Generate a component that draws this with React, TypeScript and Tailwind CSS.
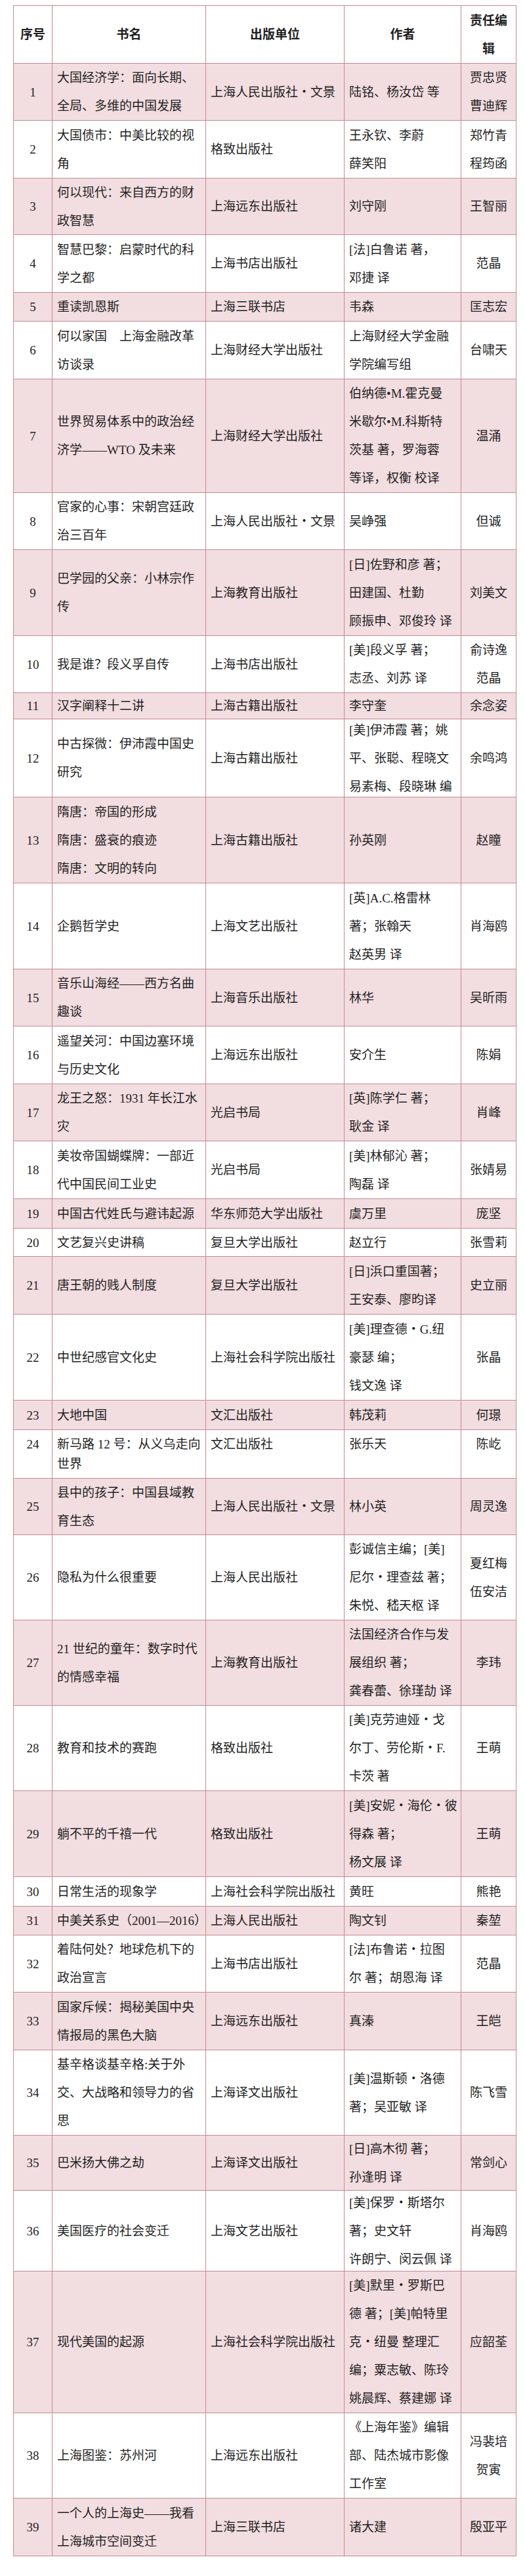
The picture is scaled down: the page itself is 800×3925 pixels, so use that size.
type Row = {
  n: string;
  title: string[];
  pub: string[];
  author: string[];
  editor: string[];
  h: string;
  top?: boolean;
};

const rows: Row[] = [
  { n: '1', title: ['大国经济学：面向长期、', '全局、多维的中国发展'], pub: ['上海人民出版社・文景'], author: ['陆铭、杨汝岱 等'], editor: ['贾忠贤', '曹迪辉'], h: 'h-[87px]' },
  { n: '2', title: ['大国债市：中美比较的视', '角'], pub: ['格致出版社'], author: ['王永钦、李蔚', '薛笑阳'], editor: ['郑竹青', '程筠函'], h: 'h-[88px]' },
  { n: '3', title: ['何以现代：来自西方的财', '政智慧'], pub: ['上海远东出版社'], author: ['刘守刚'], editor: ['王智丽'], h: 'h-[86px]' },
  { n: '4', title: ['智慧巴黎：启蒙时代的科', '学之都'], pub: ['上海书店出版社'], author: ['[法]白鲁诺 著，', '邓捷 译'], editor: ['范晶'], h: 'h-[88px]' },
  { n: '5', title: ['重读凯恩斯'], pub: ['上海三联书店'], author: ['韦森'], editor: ['匡志宏'], h: 'h-[44px]' },
  { n: '6', title: ['何以家国　上海金融改革', '访谈录'], pub: ['上海财经大学出版社'], author: ['上海财经大学金融', '学院编写组'], editor: ['台啸天'], h: 'h-[88px]' },
  { n: '7', title: ['世界贸易体系中的政治经', '济学——WTO 及未来'], pub: ['上海财经大学出版社'], author: ['伯纳德•M.霍克曼', '米歇尔•M.科斯特', '茨基 著，罗海蓉', '等译，权衡 校译'], editor: ['温涌'], h: 'h-[173px]' },
  { n: '8', title: ['官家的心事：宋朝宫廷政', '治三百年'], pub: ['上海人民出版社・文景'], author: ['吴峥强'], editor: ['但诚'], h: 'h-[87px]' },
  { n: '9', title: ['巴学园的父亲：小林宗作', '传'], pub: ['上海教育出版社'], author: ['[日]佐野和彦 著；', '田建国、杜勤', '顾振申、邓俊玲 译'], editor: ['刘美文'], h: 'h-[131px]' },
  { n: '10', title: ['我是谁？段义孚自传'], pub: ['上海书店出版社'], author: ['[美]段义孚 著；', '志丞、刘苏 译'], editor: ['俞诗逸', '范晶'], h: 'h-[87px]' },
  { n: '11', title: ['汉字阐释十二讲'], pub: ['上海古籍出版社'], author: ['李守奎'], editor: ['余念姿'], h: 'h-[40px]' },
  { n: '12', title: ['中古探微：伊沛霞中国史', '研究'], pub: ['上海古籍出版社'], author: ['[美]伊沛霞 著；姚', '平、张聪、程晓文', '易素梅、段晓琳 编'], editor: ['余鸣鸿'], h: 'h-[119px]' },
  { n: '13', title: ['隋唐：帝国的形成', '隋唐：盛衰的痕迹', '隋唐：文明的转向'], pub: ['上海古籍出版社'], author: ['孙英刚'], editor: ['赵瞳'], h: 'h-[131px]' },
  { n: '14', title: ['企鹅哲学史'], pub: ['上海文艺出版社'], author: ['[英]A.C.格雷林', '著；张翰天', '赵英男 译'], editor: ['肖海鸥'], h: 'h-[131px]' },
  { n: '15', title: ['音乐山海经——西方名曲', '趣谈'], pub: ['上海音乐出版社'], author: ['林华'], editor: ['吴昕雨'], h: 'h-[87px]' },
  { n: '16', title: ['遥望关河：中国边塞环境', '与历史文化'], pub: ['上海远东出版社'], author: ['安介生'], editor: ['陈娟'], h: 'h-[88px]' },
  { n: '17', title: ['龙王之怒：1931 年长江水', '灾'], pub: ['光启书局'], author: ['[英]陈学仁 著；', '耿金 译'], editor: ['肖峰'], h: 'h-[87px]' },
  { n: '18', title: ['美妆帝国蝴蝶牌：一部近', '代中国民间工业史'], pub: ['光启书局'], author: ['[美]林郁沁 著；', '陶磊 译'], editor: ['张婧易'], h: 'h-[88px]' },
  { n: '19', title: ['中国古代姓氏与避讳起源'], pub: ['华东师范大学出版社'], author: ['虞万里'], editor: ['庞坚'], h: 'h-[45px]' },
  { n: '20', title: ['文艺复兴史讲稿'], pub: ['复旦大学出版社'], author: ['赵立行'], editor: ['张雪莉'], h: 'h-[43px]' },
  { n: '21', title: ['唐王朝的贱人制度'], pub: ['复旦大学出版社'], author: ['[日]浜口重国著；', '王安泰、廖昀译'], editor: ['史立丽'], h: 'h-[88px]' },
  { n: '22', title: ['中世纪感官文化史'], pub: ['上海社会科学院出版社'], author: ['[美]理查德・G.纽', '豪瑟 编；', '钱文逸 译'], editor: ['张晶'], h: 'h-[131px]' },
  { n: '23', title: ['大地中国'], pub: ['文汇出版社'], author: ['韩茂莉'], editor: ['何璟'], h: 'h-[45px]' },
  { n: '24', title: ['新马路 12 号：从义乌走向', '世界'], pub: ['文汇出版社'], author: ['张乐天'], editor: ['陈屹'], h: 'h-[74px]', top: true },
  { n: '25', title: ['县中的孩子：中国县域教', '育生态'], pub: ['上海人民出版社・文景'], author: ['林小英'], editor: ['周灵逸'], h: 'h-[86px]' },
  { n: '26', title: ['隐私为什么很重要'], pub: ['上海人民出版社'], author: ['彭诚信主编；[美]', '尼尔・理查兹 著；', '朱悦、嵇天枢 译'], editor: ['夏红梅', '伍安洁'], h: 'h-[130px]' },
  { n: '27', title: ['21 世纪的童年：数字时代', '的情感幸福'], pub: ['上海教育出版社'], author: ['法国经济合作与发', '展组织 著；', '龚春蕾、徐瑾劼 译'], editor: ['李玮'], h: 'h-[130px]' },
  { n: '28', title: ['教育和技术的赛跑'], pub: ['格致出版社'], author: ['[美]克劳迪娅・戈', '尔丁、劳伦斯・F.', '卡茨 著'], editor: ['王萌'], h: 'h-[130px]' },
  { n: '29', title: ['躺不平的千禧一代'], pub: ['格致出版社'], author: ['[美]安妮・海伦・彼', '得森 著；', '杨文展 译'], editor: ['王萌'], h: 'h-[131px]' },
  { n: '30', title: ['日常生活的现象学'], pub: ['上海社会科学院出版社'], author: ['黄旺'], editor: ['熊艳'], h: 'h-[45px]' },
  { n: '31', title: ['中美关系史（2001—2016）'], pub: ['上海人民出版社'], author: ['陶文钊'], editor: ['秦堃'], h: 'h-[44px]' },
  { n: '32', title: ['着陆何处？地球危机下的', '政治宣言'], pub: ['上海书店出版社'], author: ['[法]布鲁诺・拉图', '尔 著；胡恩海 译'], editor: ['范晶'], h: 'h-[87px]' },
  { n: '33', title: ['国家斥候：揭秘美国中央', '情报局的黑色大脑'], pub: ['上海远东出版社'], author: ['真溱'], editor: ['王皑'], h: 'h-[88px]' },
  { n: '34', title: ['基辛格谈基辛格:关于外', '交、大战略和领导力的省', '思'], pub: ['上海译文出版社'], author: ['[美]温斯顿・洛德', '著；吴亚敏 译'], editor: ['陈飞雪'], h: 'h-[130px]' },
  { n: '35', title: ['巴米扬大佛之劫'], pub: ['上海译文出版社'], author: ['[日]高木彻 著；', '孙逢明 译'], editor: ['常剑心'], h: 'h-[84px]' },
  { n: '36', title: ['美国医疗的社会变迁'], pub: ['上海文艺出版社'], author: ['[美]保罗・斯塔尔', '著；史文轩', '许朗宁、闵云佩 译'], editor: ['肖海鸥'], h: 'h-[123px]' },
  { n: '37', title: ['现代美国的起源'], pub: ['上海社会科学院出版社'], author: ['[美]默里・罗斯巴', '德 著；[美]帕特里', '克・纽曼 整理汇', '编；粟志敏、陈玲', '姚晨辉、蔡建娜 译'], editor: ['应韶荃'], h: 'h-[216px]' },
  { n: '38', title: ['上海图鉴：苏州河'], pub: ['上海远东出版社'], author: ['《上海年鉴》编辑', '部、陆杰城市影像', '工作室'], editor: ['冯裴培', '贺寅'], h: 'h-[130px]' },
  { n: '39', title: ['一个人的上海史——我看', '上海城市空间变迁'], pub: ['上海三联书店'], author: ['诸大建'], editor: ['殷亚平'], h: 'h-[88px]' },
];

function Cell({ lines, center, top }: { lines: string[]; center?: boolean; top?: boolean }) {
  return (
    <div
      className={`flex flex-col border-r border-b border-[#c48a94] ${
        top ? 'justify-start pt-[7px] leading-[30px]' : 'justify-center leading-[43px]'
      } ${center ? 'items-center' : 'items-start pl-[7px]'}`}
    >
      {lines.map((l, i) => (
        <span key={i} className="whitespace-pre">
          {l}
        </span>
      ))}
    </div>
  );
}

export default function App() {
  return (
    <div className="w-[800px] bg-white pl-[20px] pt-[8px] pb-[30px] text-[19px] text-[#1f1f1f] font-['Liberation_Serif','Noto_Sans_CJK_SC',serif]">
      <div className="w-[767px] border-l border-t border-[#c48a94]">
        {/* Header */}
        <div className="grid grid-cols-[59px_234px_211px_178px_84px] grid-rows-1 h-[88px] bg-white font-bold">
          <Cell lines={['序号']} center />
          <Cell lines={['书名']} center />
          <Cell lines={['出版单位']} center />
          <Cell lines={['作者']} center />
          <Cell lines={['责任编', '辑']} center />
        </div>

        {rows.map((r, i) => (
          <div
            key={r.n}
            className={`grid grid-cols-[59px_234px_211px_178px_84px] grid-rows-1 ${r.h} ${
              i % 2 === 0 ? 'bg-[#f2dde0]' : 'bg-white'
            }`}
          >
            <Cell lines={[r.n]} center top={r.top} />
            <Cell lines={r.title} top={r.top} />
            <Cell lines={r.pub} top={r.top} />
            <Cell lines={r.author} top={r.top} />
            <Cell lines={r.editor} center top={r.top} />
          </div>
        ))}
      </div>
    </div>
  );
}
